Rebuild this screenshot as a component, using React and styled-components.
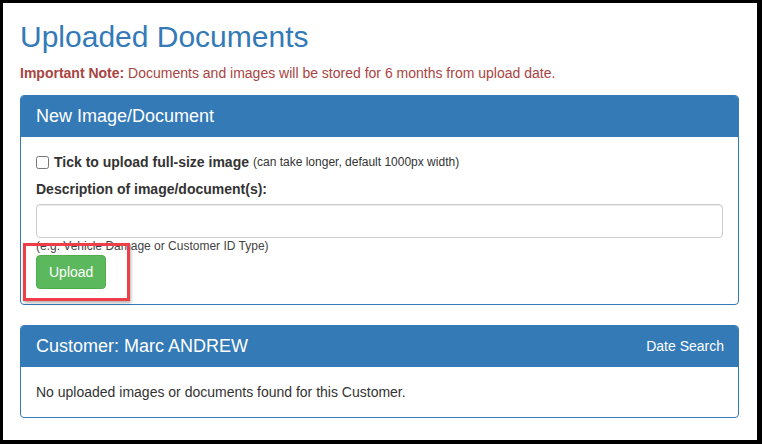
import React from "react";
import styled, { createGlobalStyle } from "styled-components";

const Global = createGlobalStyle`
  html, body { margin: 0; padding: 0; background: #000; }
  body { font-family: "Liberation Sans", Arial, sans-serif; font-size: 14px; color: #333; line-height: 1.42857; }
  * { box-sizing: border-box; }
`;

const Frame = styled.div`
  width: 754px;
  height: 437px;
  margin: 3px 5px 4px 3px;
  background: #fff;
  padding: 0 18px 0 17px;
  overflow: hidden;
`;

const Title = styled.h2`
  margin: 17px 0 10px;
  font-size: 30px;
  font-weight: 400;
  line-height: 1.1;
  color: #337ab7;
`;

const Note = styled.p`
  margin: 0 0 12px;
  color: #a94442;
  line-height: 20px;
  strong { font-weight: 700; }
`;

const Panel = styled.div`
  border: 1px solid #337ab7;
  border-radius: 4px;
  margin-bottom: 20px;
  background: #fff;
`;

const PanelHeading = styled.div`
  display: flex;
  align-items: center;
  justify-content: space-between;
  background: #337ab7;
  color: #fff;
  padding: 10px 14px 10px 15px;
  height: 41px;
  border-radius: 3px 3px 0 0;
`;

const PanelTitle = styled.h3`
  margin: 0;
  font-size: 18px;
  font-weight: 400;
  line-height: 21px;
`;

const HeadingLink = styled.span`
  font-size: 14px;
  color: #fff;
`;

const PanelBody = styled.div`
  position: relative;
  padding: 15px;
`;

const CheckRow = styled.label`
  display: flex;
  align-items: center;
  line-height: 20px;
  margin-bottom: 7px;
  input { margin: 0 5px 0 0; width: 13px; height: 13px; }
  b { font-weight: 700; }
  small { font-size: 12px; margin-left: 4px; }
`;

const Label = styled.label`
  display: block;
  font-weight: 700;
  line-height: 20px;
  margin-bottom: 5px;
`;

const Input = styled.input`
  display: block;
  width: 100%;
  height: 34px;
  border: 1px solid #ccc;
  border-radius: 4px;
  box-shadow: inset 0 1px 1px rgba(0,0,0,.075);
  padding: 6px 12px;
  font: inherit;
`;

const Help = styled.span`
  display: block;
  font-size: 12px;
  line-height: 14px;
  margin: 1px 0 2px;
  color: #444;
`;

const Button = styled.button`
  display: block;
  background: #5cb85c;
  border: 1px solid #4cae4c;
  border-radius: 4px;
  color: #fff;
  font: inherit;
  font-size: 14px;
  line-height: 20px;
  padding: 6px 12px;
  height: 34px;
`;

const Highlight = styled.div`
  position: absolute;
  left: 2px;
  top: 106px;
  width: 107px;
  height: 58px;
  border: 3px solid #ec3f48;
  box-shadow: 1px 2px 3px rgba(0,0,0,.3);
  pointer-events: none;
`;

const Text = styled.p`
  margin: 0;
  line-height: 20px;
`;

export default function App() {
  return (
    <>
      <Global />
      <Frame>
        <Title>Uploaded Documents</Title>
        <Note>
          <strong>Important Note:</strong> Documents and images will be stored for 6 months from upload date.
        </Note>
        <Panel>
          <PanelHeading>
            <PanelTitle>New Image/Document</PanelTitle>
          </PanelHeading>
          <PanelBody>
            <CheckRow>
              <input type="checkbox" />
              <b>Tick to upload full-size image</b>
              <small>(can take longer, default 1000px width)</small>
            </CheckRow>
            <Label>Description of image/document(s):</Label>
            <Input type="text" />
            <Help>(e.g. Vehicle Damage or Customer ID Type)</Help>
            <Button>Upload</Button>
            <Highlight />
          </PanelBody>
        </Panel>
        <Panel>
          <PanelHeading>
            <PanelTitle>Customer: Marc ANDREW</PanelTitle>
            <HeadingLink>Date Search</HeadingLink>
          </PanelHeading>
          <PanelBody>
            <Text>No uploaded images or documents found for this Customer.</Text>
          </PanelBody>
        </Panel>
      </Frame>
    </>
  );
}
